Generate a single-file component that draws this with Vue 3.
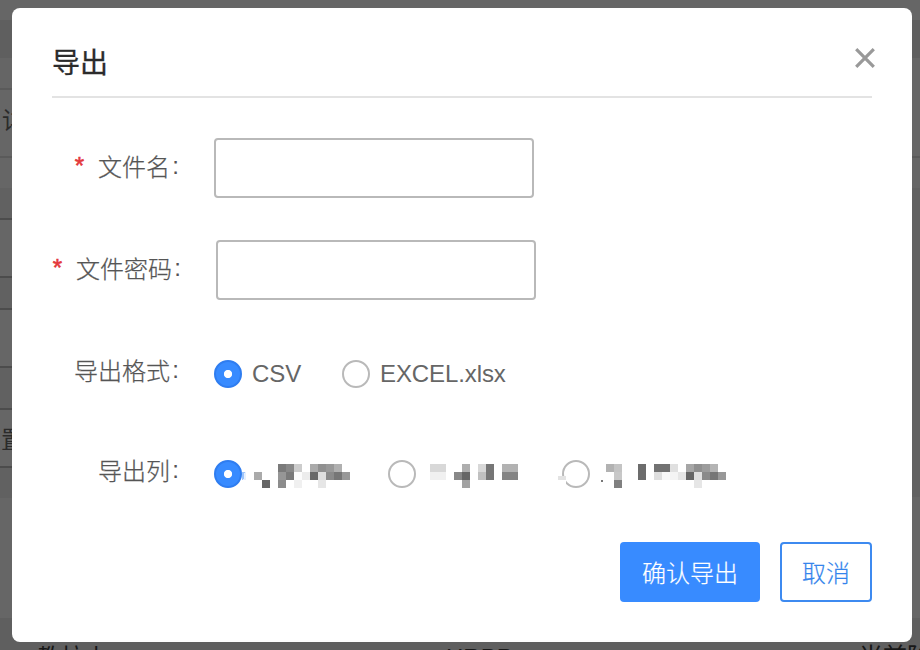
<script setup>
import { ref } from 'vue'

const format = ref('csv')
const column = ref('a')

// [height, background]
const leftBands = [
  [20, '#666666'], [38, '#5f5f5f'], [30, '#656565'], [2, '#5a5a5a'], [66, '#666666'],
  [2, '#5a5a5a'], [30, '#666666'], [30, '#616161'], [2, '#4c4c4c'], [56, '#666666'],
  [2, '#4c4c4c'], [30, '#616161'], [2, '#4c4c4c'], [56, '#666666'], [2, '#4c4c4c'],
  [40, '#616161'], [2, '#4c4c4c'], [56, '#666666'], [2, '#4c4c4c'], [30, '#616161'],
  [120, '#666666'], [32, '#5f5f5f'],
]
const rightBands = [
  [20, '#666666'], [38, '#5f5f5f'], [98, '#666666'], [2, '#5a5a5a'], [30, '#666666'],
  [309, '#616161'], [121, '#666666'], [32, '#5f5f5f'],
]

// Masked labels on an 8px grid: [column, row, grey level]
const columns = [
  {
    id: 'a', width: 96,
    cells: [
      [3, 0, 122], [4, 0, 136], [5, 0, 204], [7, 0, 170], [8, 0, 144], [9, 0, 153], [10, 0, 176],
      [0, 1, 170], [3, 1, 150], [4, 1, 122], [5, 1, 252], [6, 1, 236], [7, 1, 104], [8, 1, 222],
      [9, 1, 138], [10, 1, 118], [11, 1, 152],
      [1, 2, 102], [3, 2, 140], [5, 2, 240], [8, 2, 230],
    ],
  },
  {
    id: 'b', width: 88,
    cells: [
      [0, 0, 216], [1, 0, 216], [4, 0, 174], [6, 0, 216], [7, 0, 118], [9, 0, 178], [10, 0, 178],
      [0, 1, 240], [1, 1, 240], [3, 1, 136], [4, 1, 102], [6, 1, 192], [7, 1, 118], [9, 1, 132], [10, 1, 132],
      [4, 2, 162],
    ],
  },
  {
    id: 'c', width: 120,
    cells: [
      [0, 0, 178], [1, 0, 196], [4, 0, 108], [6, 0, 114], [7, 0, 114], [8, 0, 224],
      [10, 0, 166], [11, 0, 144], [12, 0, 156], [13, 0, 180],
      [1, 1, 200], [4, 1, 108], [6, 1, 222], [7, 1, 248], [8, 1, 244], [9, 1, 230], [10, 1, 102],
      [11, 1, 224], [12, 1, 138], [13, 1, 118], [14, 1, 152],
      [1, 2, 128], [11, 2, 230],
    ],
  },
]
</script>

<template>
  <div class="screen">
    <div class="page">
      <div class="strip left">
        <div v-for="(b, i) in leftBands" :key="i" :style="{ height: b[0] + 'px', background: b[1] }"></div>
      </div>
      <div class="strip right">
        <div v-for="(b, i) in rightBands" :key="i" :style="{ height: b[0] + 'px', background: b[1] }"></div>
      </div>
      <span class="behind t-request">详</span>
      <span class="behind t-place">置</span>
      <span class="behind t-foot1">教拉上</span>
      <span class="behind t-foot2">HRBP</span>
      <span class="behind t-foot3">当前阶</span>
    </div>

    <section class="dialog">
      <header class="head">
        <h1>导出</h1>
        <svg class="close" width="20" height="20" viewBox="0 0 20 20">
          <path d="M1.2 1.2 18.8 18.8M18.8 1.2 1.2 18.8" stroke="#999" stroke-width="3.2" fill="none" />
        </svg>
      </header>

      <div class="row">
        <label><i>*</i><span>文件名</span><b>:</b></label>
        <input type="text" />
      </div>
      <div class="row shifted">
        <label><i>*</i><span>文件密码</span><b>:</b></label>
        <input type="text" />
      </div>
      <div class="row format">
        <label><span>导出格式</span><b>:</b></label>
        <div class="option csv" @click="format = 'csv'">
          <span class="radio" :class="{ on: format === 'csv' }"></span><span class="latin">CSV</span>
        </div>
        <div class="option" @click="format = 'xlsx'">
          <span class="radio" :class="{ on: format === 'xlsx' }"></span><span class="latin">EXCEL.xlsx</span>
        </div>
      </div>
      <div class="row cols">
        <label><span>导出列</span><b>:</b></label>
        <div v-for="c in columns" :key="c.id" class="option masked" :class="'col-' + c.id" @click="column = c.id">
          <span class="radio" :class="{ on: column === c.id }"></span>
          <svg class="mosaic" :width="c.width" height="24" shape-rendering="crispEdges">
            <rect
              v-for="([x, y, g], i) in c.cells" :key="i"
              :x="x * 8" :y="y * 8" width="8" height="8" :fill="`rgb(${g},${g},${g})`"
            />
          </svg>
        </div>
      </div>

      <footer class="actions">
        <button class="primary">确认导出</button>
        <button class="plain">取消</button>
      </footer>
    </section>
  </div>
</template>

<style>
body {
  margin: 0;
  overflow: hidden;
}
</style>

<style scoped>
.screen {
  position: relative;
  box-sizing: border-box;
  width: 920px;
  height: 650px;
  padding: 8px 8px 8px 12px;
  overflow: hidden;
  font-family: "Liberation Sans", "Noto Sans CJK SC", sans-serif;
}
.page {
  position: absolute;
  inset: 0;
  display: flex;
}
.strip {
  flex: 1;
}
.behind {
  position: absolute;
  font-size: 24px;
  line-height: 24px;
  color: #2b2b2b;
  white-space: nowrap;
}
.t-request { left: 2px; top: 109px; }
.t-place { left: 1px; top: 428px; }
.t-foot1 { left: 37px; top: 646px; color: #181818; }
.t-foot2 { left: 446px; top: 646px; color: #181818; }
.t-foot3 { left: 859px; top: 645px; color: #181818; }

.dialog {
  position: relative;
  box-sizing: border-box;
  width: 900px;
  height: 634px;
  padding: 0 40px;
  border-radius: 8px;
  background: #fff;
}
.head {
  display: flex;
  justify-content: space-between;
  box-sizing: border-box;
  height: 90px;
  border-bottom: 2px solid #e3e3e3;
}
h1 {
  margin: 36px 0 0;
  font-size: 28px;
  line-height: 40px;
  font-weight: 400;
  color: #2b2b2b;
  -webkit-text-stroke: 0.3px #2b2b2b;
}
.close {
  margin: 40px -3px 0 0;
}
.row {
  display: flex;
  align-items: center;
  height: 60px;
  margin-top: 40px;
}
label {
  display: flex;
  justify-content: flex-end;
  width: 127px;
  margin: 0 35px 4px 0;
  font-size: 24px;
  line-height: 32px;
  color: #555;
}
label span {
  font-family: "Noto Sans CJK SC", sans-serif;
  font-weight: 300;
  -webkit-text-stroke: 0.25px #555;
}
label i {
  margin-right: 14px;
  font-style: normal;
  font-weight: 400;
  color: #e4393c;
  -webkit-text-stroke: 0.6px #e4393c;
}
label b {
  width: 9px;
  font-weight: 400;
  text-align: right;
}
input {
  box-sizing: border-box;
  width: 320px;
  height: 60px;
  padding: 0 12px;
  border: 2px solid #b9b9b9;
  border-radius: 4px;
  outline: none;
  background: #fff;
  font-size: 24px;
}
.shifted {
  margin-top: 42px;
}
.shifted label {
  width: 129px;
}
.format {
  margin-top: 44px;
}
.format label,
.cols label {
  margin-bottom: 8px;
}
.option {
  display: flex;
  align-items: center;
}
.csv {
  width: 128px;
}
.radio {
  position: relative;
  flex: none;
  box-sizing: border-box;
  width: 28px;
  height: 28px;
  margin-right: 10px;
  border: 2px solid #b9b9b9;
  border-radius: 50%;
  background: #fff;
}
.radio.on {
  border: 2px solid #2f7df0;
  background: radial-gradient(circle, #fff 3.7px, #388bff 4.5px);
}
.latin {
  font-size: 24px;
  line-height: 28px;
  letter-spacing: -0.1px;
  color: #666;
}
.masked {
  position: relative;
}
.masked .radio {
  margin-right: 12px;
}
.mosaic {
  margin-top: 4px;
}
.col-a { width: 174px; }
.col-b { width: 174px; }
.col-b .radio { margin-right: 14px; }
.col-c .radio { margin-right: 16px; }
.col-a::before {
  content: "";
  position: absolute;
  left: 28px;
  top: 12px;
  width: 4px;
  height: 8px;
  background: linear-gradient(100deg, #9cc4fb 50%, #e6f0fe 51%);
}
.col-c::before {
  content: "";
  position: absolute;
  z-index: 1;
  left: -4px;
  top: 16px;
  width: 8px;
  height: 8px;
  background: linear-gradient(#e3e3e3 50%, #fff 50%);
}
.col-c::after {
  content: "";
  position: absolute;
  left: 39px;
  top: 20px;
  width: 2px;
  height: 2px;
  background: #777;
}
.actions {
  display: flex;
  justify-content: flex-end;
  gap: 20px;
  margin-top: 38px;
}
button {
  box-sizing: border-box;
  height: 60px;
  padding: 0 0 2px;
  border-radius: 4px;
  font-family: "Noto Sans CJK SC", sans-serif;
  font-size: 24px;
  font-weight: 300;
  -webkit-text-stroke: 0.2px currentColor;
}
.primary {
  width: 140px;
  border: 0;
  background: #388bff;
  color: #fff;
}
.plain {
  width: 92px;
  border: 2px solid #3d8af0;
  background: #fff;
  color: #3585ec;
}
</style>
